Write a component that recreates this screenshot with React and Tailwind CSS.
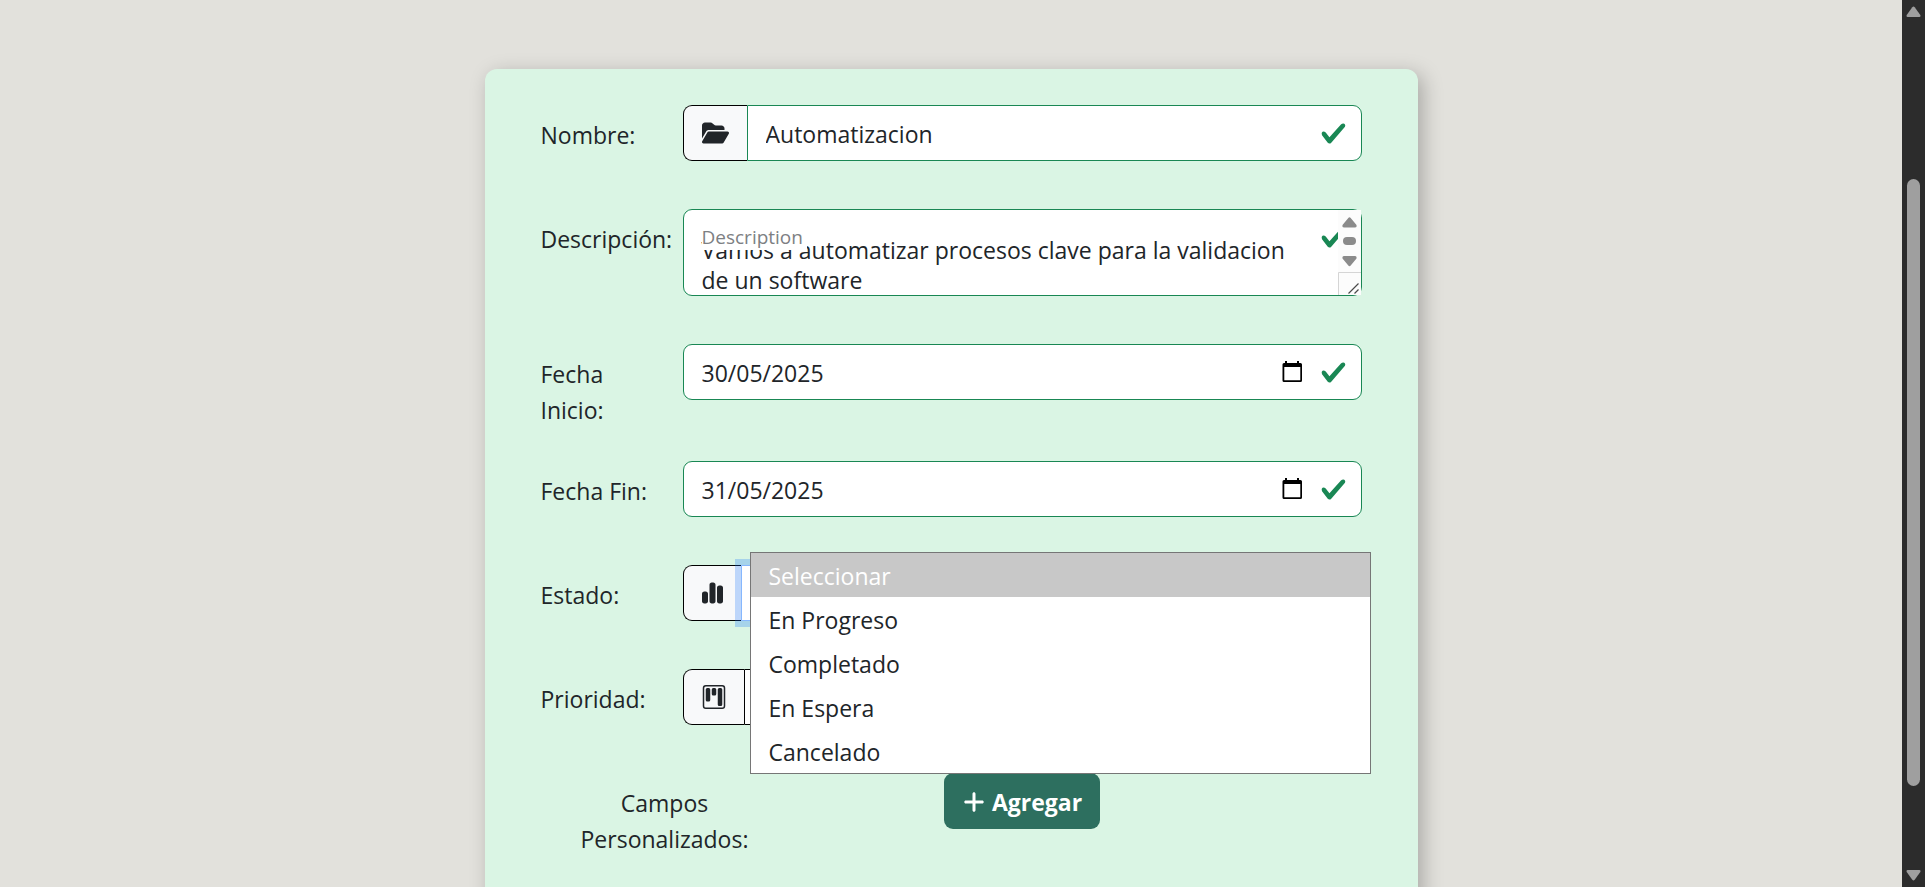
import React from 'react';
import { FaFolderOpen, FaChartSimple, FaPlus } from 'react-icons/fa6';
import { BsKanban } from 'react-icons/bs';

const STATES = ['Seleccionar', 'En Progreso', 'Completado', 'En Espera', 'Cancelado'];

function Check() {
  return (
    <svg viewBox="0 0 8 8" className="pointer-events-none absolute top-[15px] right-[15px] size-[27px]" aria-hidden="true">
      <path
        fill="#198754"
        d="M2.3 6.73.6 4.53c-.4-1.04.46-1.4 1.1-.8l1.1 1.4 3.4-3.8c.6-.63 1.6-.27 1.2.7l-4 4.6c-.43.5-.8.4-1.1.1z"
      />
    </svg>
  );
}

function Row({ id, label, children }) {
  return (
    <div className="flex gap-6">
      <label htmlFor={id} className="mb-[33px] w-[118px] shrink-0 pt-3 leading-9">
        {label}
      </label>
      <div className="relative mb-12 min-w-0 flex-1">{children}</div>
    </div>
  );
}

function Addon({ children }) {
  return (
    <span className="flex shrink-0 items-center rounded-l-[9px] border border-r-0 border-black bg-[#f8f9fa] px-[18px]">
      {children}
    </span>
  );
}

function DateField({ id, value }) {
  return (
    <div className="relative">
      <input
        id={id}
        type="text"
        defaultValue={value}
        className="block h-14 w-full rounded-[9px] border border-[#198754] bg-white pt-[2px] pr-24 pl-[18px] outline-none"
      />
      <button type="button" aria-label="Abrir calendario" className="absolute top-4 right-[58px] size-6">
        <svg viewBox="0 0 24 24" className="size-6" aria-hidden="true">
          <path
            fill="#000"
            d="M5 1h2v2h10V1h2v2h1.500A1.500 1.500 0 0 1 22 4.500V20.500A1.500 1.500 0 0 1 20.500 22H4a1.500 1.500 0 0 1-1.500-1.500V4.500A1.500 1.500 0 0 1 4 3h1zM4.300 7v13.200h16V7z"
            fillRule="evenodd"
          />
        </svg>
      </button>
      <Check />
    </div>
  );
}

function StatusMenu() {
  return (
    <ul
      role="listbox"
      aria-label="Estado"
      className="absolute -top-[13px] -right-[9px] left-[67px] z-10 border border-[#767676] bg-white"
    >
      {STATES.map((s, i) => (
        <li
          key={s}
          role="option"
          aria-selected={i === 0}
          className={`flex h-11 items-center px-[18px] pt-[2px] ${i === 0 ? 'bg-[#c8c8c8] text-white' : ''}`}
        >
          {s}
        </li>
      ))}
    </ul>
  );
}

function PageScrollbar() {
  return (
    <div className="flex w-[23px] shrink-0 flex-col items-center bg-[#2c2c2c] py-[6px]" aria-hidden="true">
      <svg viewBox="0 0 15 12" className="h-3 w-[15px]">
        <path fill="#9f9f9f" d="M6.300 1.200Q7.500-.2 8.700 1.200L14.300 9Q15 11 13.300 11H1.700Q0 11 .7 9z" />
      </svg>
      <div className="grow-[161]" />
      <div className="w-[13px] grow-[607] rounded-full bg-[#9f9f9f]" />
      <div className="grow-[83]" />
      <svg viewBox="0 0 15 12" className="h-3 w-[15px]">
        <path fill="#9f9f9f" d="M6.300 10.800Q7.500 12.200 8.700 10.800L14.300 3Q15 1 13.300 1H1.700Q0 1 .7 3z" />
      </svg>
    </div>
  );
}

export default function App() {
  return (
    <div className="flex h-screen overflow-hidden bg-[#e2e1dc] font-['Open_Sans','Noto_Sans',sans-serif] text-[23px] text-[#212529]">
      <main className="min-w-0 flex-1 overflow-hidden pt-[69px]">
        <form className="mx-auto w-[933px] max-w-full rounded-xl bg-[#daf5e4] px-14 pt-9 pb-12 shadow-[5px_5px_20px_rgba(0,0,0,0.25)]">
          <Row id="nombre" label="Nombre:">
            <div className="flex h-14">
              <Addon>
                <FaFolderOpen className="h-6 w-[27px]" />
              </Addon>
              <input
                id="nombre"
                type="text"
                defaultValue="Automatizacion"
                className="w-full min-w-0 rounded-r-[9px] border border-[#198754] bg-white pt-[2px] pr-14 pl-[18px] outline-none"
              />
            </div>
            <Check />
          </Row>

          <Row id="descripcion" label="Descripción:">
            <div className="relative">
              <textarea
                id="descripcion"
                defaultValue="Vamos a automatizar procesos clave para la validacion de un software"
                className="block h-[87px] w-full resize-none overflow-hidden rounded-[9px] border border-[#198754] bg-white pt-[25px] pr-[72px] pl-[18px] leading-[30px] outline-none"
              />
              <span className="absolute top-4 left-[19px] bg-white pr-1 text-[19px] leading-[25px] text-[#7d8083]">
                Description
              </span>
              <Check />
              <svg viewBox="0 0 23 85" className="absolute top-px right-px h-[85px] w-[23px]" aria-hidden="true">
                <path fill="#fcfcfc" d="M0 0h23v85H0z" />
                <path fill="#8b8b8b" d="M10.300 8Q11.500 6.400 12.700 8L18.500 15Q19 17.500 17 17.500H6Q4 17.500 4.500 15z" />
                <rect x="5" y="27" width="13" height="8" rx="4" fill="#8b8b8b" />
                <path fill="#8b8b8b" d="M10.300 55.500Q11.500 57 12.700 55.500L18.500 48.500Q19 46 17 46H6Q4 46 4.500 48.500z" />
                <path fill="none" stroke="#d5d5d5" d="M.5 85V62.500H23" />
                <path fill="none" stroke="#4a4a4a" strokeWidth="1.200" d="M10.500 83.500l10-10M16.500 83.500l4-4" />
              </svg>
            </div>
          </Row>

          <Row id="inicio" label="Fecha Inicio:">
            <DateField id="inicio" value="30/05/2025" />
          </Row>

          <Row id="fin" label="Fecha Fin:">
            <DateField id="fin" value="31/05/2025" />
          </Row>

          <Row id="estado" label="Estado:">
            <div className="flex h-14">
              <Addon>
                <FaChartSimple className="h-6 w-[21px]" />
              </Addon>
              <select
                id="estado"
                className="w-full min-w-0 appearance-none rounded-r-[9px] border border-[#86b7fe] bg-white px-[18px] shadow-[0_0_0_6px_rgba(13,110,253,0.25)] outline-none"
              >
                {STATES.map((s) => (
                  <option key={s}>{s}</option>
                ))}
              </select>
            </div>
            <StatusMenu />
          </Row>

          <Row id="prioridad" label="Prioridad:">
            <div className="flex h-14">
              <Addon>
                <BsKanban className="size-6" />
              </Addon>
              <select
                id="prioridad"
                className="w-full min-w-0 appearance-none rounded-r-[9px] border border-black bg-white px-[18px] outline-none"
              >
                <option>Seleccionar</option>
              </select>
            </div>
          </Row>

          <div className="flex items-start">
            <span className="w-[248px] px-8 pt-3 text-center leading-9">Campos Personalizados:</span>
            <div className="flex w-[467px] justify-center">
              <button
                type="button"
                className="flex h-14 items-center gap-[6px] rounded-[9px] bg-[#2d6f5f] px-[18px] pt-[2px] text-[23px] font-bold text-white"
              >
                <FaPlus className="size-6" />
                Agregar
              </button>
            </div>
          </div>
        </form>
      </main>
      <PageScrollbar />
    </div>
  );
}
